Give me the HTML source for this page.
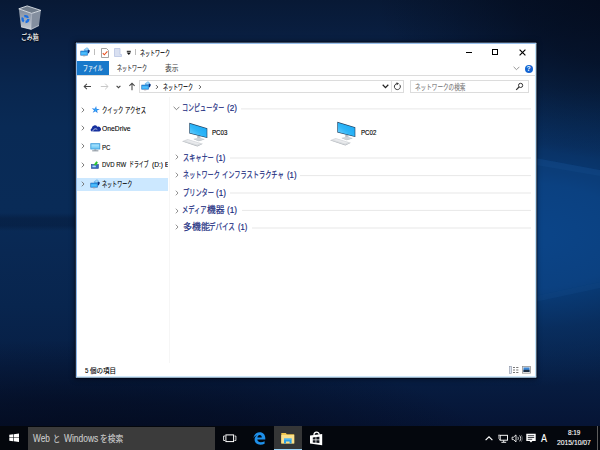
<!DOCTYPE html>
<html lang="ja">
<head>
<meta charset="utf-8">
<title>ネットワーク</title>
<style>
*{box-sizing:border-box;margin:0;padding:0}
html,body{width:600px;height:450px;overflow:hidden}
body{position:relative;font-family:"Liberation Sans","Noto Sans CJK JP",sans-serif;font-size:7.5px;color:#000;background:#071a3a;}
.abs{position:absolute}
.t{position:absolute;white-space:nowrap;line-height:10px;height:10px;transform-origin:0 50%;-webkit-text-stroke:.1px currentColor}
#wall{position:absolute;left:0;top:0;width:600px;height:450px;
 background:
  radial-gradient(ellipse 250px 175px at 625px -15px, rgba(3,10,26,.9) 0%, rgba(3,10,26,.62) 45%, rgba(3,10,26,.25) 75%, rgba(3,10,26,0) 100%),
  radial-gradient(ellipse 420px 120px at 80px 460px, rgba(3,9,26,.85) 0%, rgba(3,9,26,.55) 50%, rgba(3,9,26,0) 100%),
  radial-gradient(ellipse 300px 150px at 525px 236px, rgba(9,65,130,1) 0%, rgba(9,62,124,.95) 35%, rgba(9,52,106,.62) 62%, rgba(9,42,88,0) 100%),
  linear-gradient(180deg,#081935 0%,#091f42 9%,#09264e 19%,#092a55 28%,#092b57 46%,#092853 56%,#08254e 68%,#071d42 84%,#061536 94%,#05112d 100%);
}
/* taskbar */
#tb{position:absolute;left:0;top:426px;width:600px;height:24px;background:#04070d}
#tbs{position:absolute;left:28px;top:1px;width:187px;height:23px;background:#3b3b3b}
/* window */
#win{position:absolute;left:76px;top:43px;width:460px;height:334px;transform-origin:0 0;transform:translate(-.1px,-.2px) scale(1.0007,1.0021);background:#fff;border:1px solid;border-color:#7fb0e8 #b2dbf8 #a2d2f6 #7fb0e8;box-shadow:0 0 0 1px rgba(0,3,12,.8),0 0 5px 1px rgba(0,0,10,.55)}
#filetab{position:absolute;left:77px;top:61px;width:32px;height:14px;background:#1979ca}
.hl{position:absolute;height:1px;background:#e8e8e8}
.g{color:#1a2b80;font-size:9px;-webkit-text-stroke-width:.2px}
</style>
</head>
<body>
<div id="wall">
<svg class="abs" style="left:0;top:0" width="600" height="450" viewBox="0 0 600 450">
 <polygon points="530,157 600,170 600,282 530,297" fill="#2a86e0" fill-opacity=".07"/>
 <polygon points="530,157 600,170 600,176 530,164" fill="#4aa0f0" fill-opacity=".06"/>
 <polygon points="530,297 600,282 600,288 530,303" fill="#4aa0f0" fill-opacity=".06"/>
 <defs><linearGradient id="bandG" x1="0" y1="0" x2="0" y2="1"><stop offset="0" stop-color="#04132e" stop-opacity="0"/><stop offset=".3" stop-color="#04132e" stop-opacity=".34"/><stop offset=".7" stop-color="#04132e" stop-opacity=".34"/><stop offset="1" stop-color="#04132e" stop-opacity="0"/></linearGradient></defs>
 <rect x="0" y="213" width="80" height="18" fill="url(#bandG)"/>
</svg>
</div>

<!-- recycle bin -->
<svg class="abs" style="left:14px;top:2px" width="32" height="32" viewBox="0 0 32 32">
 <defs><linearGradient id="binL" x1="0" y1="0" x2="0" y2="1"><stop offset="0" stop-color="#9aa4b2" stop-opacity=".82"/><stop offset="1" stop-color="#cdd3db" stop-opacity=".95"/></linearGradient></defs>
 <polygon points="4.8,6.8 13.2,3.9 26.9,8.4 17.6,11.4" fill="#7b8594" fill-opacity=".92"/>
 <polygon points="4.8,6.8 17.6,11.4 17.1,27.4 7.1,24.9" fill="url(#binL)"/>
 <polygon points="17.6,11.4 26.9,8.4 25.0,23.5 17.1,27.4" fill="#8f99a8" fill-opacity=".92"/>
 <polygon points="4.8,6.8 13.2,3.9 26.9,8.4 17.6,11.4" fill="none" stroke="#dfe4ea" stroke-width=".9" stroke-linejoin="round"/>
 <polyline points="7.1,24.9 17.1,27.4 25.0,23.5" fill="none" stroke="#e6e9ee" stroke-width=".8" stroke-opacity=".85"/>
 <line x1="17.63869132290185" y1="11.379800853485063" x2="17.069701280227594" y2="27.382645803698434" stroke="#d5dae2" stroke-width=".7" stroke-opacity=".8"/>
 <circle cx="11.400" cy="17.100" r="2.900" fill="none" stroke="#1b6fe2" stroke-width="2.300" stroke-dasharray="4.300 1.800"/>
</svg>
<div class="t" id="t_bin" style="left:21.200px;top:32.600px;color:#fff;font-size:7.500px;text-shadow:0 1px 1px #000,0 0 2px #000;transform:scaleX(0.782)">ごみ箱</div>

<div id="win"></div>
<div id="filetab"></div>
<div class="hl" style="left:77px;top:75px;width:458px;background:#dcdcdc"></div>

<!-- title bar: quick access toolbar -->
<svg class="abs" style="left:80.200px;top:47.300px" width="11" height="10" viewBox="0 0 11 10">
 <path d="M3.600 2.700 L7 0.200 L9.200 2.300 L8.300 4.300 L4.400 4.300 Z" fill="#6fb9ee"/>
 <path d="M5 2.600 L7 1.100 L8.100 2.200 L7.400 3.600 Z" fill="#a9d8f6"/>
 <path d="M7.700 2.700 L10 3.600 L8.700 6.400 L7.600 5.700 Z" fill="#0d3079"/>
 <rect x="0.400" y="3.700" width="7.300" height="4.800" rx=".3" fill="#1562b4"/>
 <rect x="0.900" y="4.400" width="6.400" height="3.700" fill="#2da4f3"/>
 <rect x="1.300" y="5.300" width="5.400" height="2.100" fill="#5cc6fe" fill-opacity=".75"/>
 <rect x="2.900" y="8.500" width="2.400" height=".8" fill="#a39aa2"/>
</svg>
<div class="abs" style="left:94px;top:48.500px;width:1px;height:6.800px;background:#bdbdbd"></div>
<svg class="abs" style="left:101px;top:48px" width="8" height="10" viewBox="0 0 8 10">
 <path d="M0.5 0.5 H5.5 L7.5 2.5 V9.5 H0.5 Z" fill="#fff" stroke="#8c8c8c" stroke-width=".800"/>
 <path d="M1.8 5.2 L3.3 6.8 L6.4 3.3" fill="none" stroke="#e8501f" stroke-width="1.100"/>
</svg>
<svg class="abs" style="left:114px;top:48px" width="8" height="9" viewBox="0 0 8 9">
 <path d="M0.5 0.5 H6 V6.5 H7.5 V8.5 H0.5 Z" fill="#d9e0f1" stroke="#b9c4e2" stroke-width=".8"/>
</svg>
<svg class="abs" style="left:126px;top:50px" width="6" height="6" viewBox="0 0 6 6">
 <rect x="0.8" y="0.8" width="4" height="1" fill="#111"/>
 <path d="M0.6 2.6 H5 L2.8 5 Z" fill="#111"/>
</svg>
<div class="abs" style="left:135px;top:48.500px;width:1px;height:6.800px;background:#bdbdbd"></div>
<div class="t" id="t_title" style="left:140px;top:48.6px;transform:scaleX(0.667)">ネットワーク</div>

<!-- caption buttons -->
<div class="abs" style="left:466px;top:52px;width:6px;height:1px;background:#000"></div>
<div class="abs" style="left:492px;top:49px;width:6px;height:6px;border:1px solid #000"></div>
<svg class="abs" style="left:519px;top:49px" width="7" height="7" viewBox="0 0 7 7"><path d="M0.600 0.600 L6.400 6.400 M6.400 0.600 L0.600 6.400" stroke="#000" stroke-width="1.150"/></svg>

<!-- ribbon tabs -->
<div class="t" id="t_file" style="left:82.600px;top:64.0px;color:#fff;transform:scaleX(0.653)">ファイル</div>
<div class="t" id="t_tabnet" style="left:117px;top:64.2px;color:#3a3a3a;-webkit-text-stroke-width:.15px;transform:scaleX(0.667)">ネットワーク</div>
<div class="t" id="t_tabview" style="left:165px;top:64.2px;color:#444;-webkit-text-stroke-width:.1px;transform:scaleX(0.893)">表示</div>
<svg class="abs" style="left:513px;top:66px" width="7" height="5" viewBox="0 0 7 5"><path d="M0.6 0.8 L3.5 3.7 L6.4 0.8" fill="none" stroke="#8a8a8a" stroke-width=".9"/></svg>
<div class="abs" style="left:524.500px;top:64.500px;width:8.200px;height:8.200px;border-radius:50%;background:#1464d2;color:#fff;font-size:6.800px;font-weight:bold;line-height:8.400px;text-align:center">?</div>

<!-- nav row -->
<svg class="abs" style="left:83px;top:83px" width="9" height="7" viewBox="0 0 9 7"><path d="M8 3.500 H1.200 M3.900 0.800 L1.200 3.500 L3.900 6.200" fill="none" stroke="#454545" stroke-width="1.050"/></svg>
<svg class="abs" style="left:100px;top:83px" width="9" height="7" viewBox="0 0 9 7"><path d="M0.8 3.5 H8 M5.2 0.7 L8 3.5 L5.2 6.3" fill="none" stroke="#c8c8c8" stroke-width="1"/></svg>
<svg class="abs" style="left:116px;top:85px" width="5" height="4" viewBox="0 0 5 4"><path d="M0.600 0.800 L2.500 2.700 L4.400 0.800" fill="none" stroke="#444" stroke-width="1.100"/></svg>
<svg class="abs" style="left:128px;top:82px" width="8" height="9" viewBox="0 0 8 9"><path d="M4 8.200 V1.200 M1.400 3.800 L4 1.200 L6.600 3.800" fill="none" stroke="#454545" stroke-width="1.050"/></svg>
<div class="abs" style="left:139px;top:80px;width:265px;height:13px;border:1px solid #dcdcdc;background:#fff"></div>
<svg class="abs" style="left:140.600px;top:81.300px" width="11" height="10" viewBox="0 0 11 10">
 <path d="M3.600 2.700 L7 0.200 L9.200 2.300 L8.300 4.300 L4.400 4.300 Z" fill="#6fb9ee"/>
 <path d="M5 2.600 L7 1.100 L8.100 2.200 L7.400 3.600 Z" fill="#a9d8f6"/>
 <path d="M7.700 2.700 L10 3.600 L8.700 6.400 L7.600 5.700 Z" fill="#0d3079"/>
 <rect x="0.400" y="3.700" width="7.300" height="4.800" rx=".3" fill="#1562b4"/>
 <rect x="0.900" y="4.400" width="6.400" height="3.700" fill="#2da4f3"/>
 <rect x="1.300" y="5.300" width="5.400" height="2.100" fill="#5cc6fe" fill-opacity=".75"/>
 <rect x="2.900" y="8.500" width="2.400" height=".8" fill="#a39aa2"/>
</svg>
<svg class="abs" style="left:155px;top:84px" width="4" height="6" viewBox="0 0 4 6"><path d="M1 1.100 L2.900 3 L1 4.900" fill="none" stroke="#555" stroke-width=".95"/></svg>
<div class="t" id="t_addr" style="left:163px;top:82.5px;transform:scaleX(0.667)">ネットワーク</div>
<svg class="abs" style="left:198px;top:84px" width="4" height="6" viewBox="0 0 4 6"><path d="M1 1.100 L2.900 3 L1 4.900" fill="none" stroke="#555" stroke-width=".95"/></svg>
<svg class="abs" style="left:382px;top:84px" width="7" height="5" viewBox="0 0 7 5"><path d="M0.700 0.800 L3.500 3.600 L6.300 0.800" fill="none" stroke="#222" stroke-width="1.250"/></svg>
<div class="abs" style="left:391px;top:81px;width:1px;height:11px;background:#e0e0e0"></div>
<svg class="abs" style="left:393px;top:82px" width="9" height="9" viewBox="0 0 9 9"><path d="M6.700 2.700 A3 3 0 1 1 4.300 1.600" fill="none" stroke="#3a3a3a" stroke-width="1"/><path d="M3.500 0.200 L6 1.600 L3.800 3.300 Z" fill="#3a3a3a"/></svg>
<div class="abs" style="left:410px;top:80px;width:119px;height:13px;border:1px solid #dcdcdc;background:#fff"></div>
<div class="t" id="t_search" style="left:415px;top:82.5px;color:#787878;-webkit-text-stroke-width:.1px;transform:scaleX(0.747)">ネットワークの検索</div>
<svg class="abs" style="left:515px;top:82px" width="9" height="9" viewBox="0 0 9 9"><circle cx="5.6" cy="3.4" r="2.1" fill="none" stroke="#333" stroke-width="1"/><path d="M4 5 L1.2 7.8" stroke="#333" stroke-width="1.2"/></svg>

<!-- navigation pane -->
<div class="abs" style="left:77px;top:177.600px;width:90.500px;height:13.500px;background:#cce8ff"></div>
<div class="abs" style="left:169px;top:97px;width:1px;height:266px;background:#f6f6f6"></div>

<svg class="abs" style="left:81px;top:106.7px" width="4" height="6" viewBox="0 0 4 6"><path d="M0.8 0.7 L3 3 L0.8 5.3" fill="none" stroke="#6e6e6e" stroke-width=".9"/></svg>
<svg class="abs" style="left:81px;top:125.3px" width="4" height="6" viewBox="0 0 4 6"><path d="M0.8 0.7 L3 3 L0.8 5.3" fill="none" stroke="#6e6e6e" stroke-width=".9"/></svg>
<svg class="abs" style="left:81px;top:143.3px" width="4" height="6" viewBox="0 0 4 6"><path d="M0.8 0.7 L3 3 L0.8 5.3" fill="none" stroke="#6e6e6e" stroke-width=".9"/></svg>
<svg class="abs" style="left:81px;top:161.5px" width="4" height="6" viewBox="0 0 4 6"><path d="M0.8 0.7 L3 3 L0.8 5.3" fill="none" stroke="#6e6e6e" stroke-width=".9"/></svg>
<svg class="abs" style="left:81px;top:180.6px" width="4" height="6" viewBox="0 0 4 6"><path d="M0.8 0.7 L3 3 L0.8 5.3" fill="none" stroke="#6e6e6e" stroke-width=".9"/></svg>
<svg class="abs" style="left:91px;top:105.600px" width="10" height="8" viewBox="0 0 10 8"><polygon points="5.11,0.06 5.65,2.88 8.82,3.15 6.01,4.49 6.69,7.28 4.41,5.28 1.67,6.74 3.08,4.17 0.70,2.27 3.85,2.68" fill="#1f7de8"/><circle cx="4.600" cy="3.900" r="1.300" fill="#35a8fa"/></svg>
<svg class="abs" style="left:89.700px;top:124.500px" width="11" height="7" viewBox="0 0 11 7"><path d="M1.900 6.600 A1.800 1.800 0 0 1 1.800 3.200 A3 3 0 0 1 7.300 1.700 A2.600 2.600 0 0 1 9.300 6.600 Z" fill="#16309e"/><path d="M2.700 6.700 C3 4.200 5.400 3 7.300 4.600" fill="none" stroke="#fff" stroke-width=".7"/></svg>
<svg class="abs" style="left:90px;top:142.700px" width="11" height="9" viewBox="0 0 11 9"><rect x="0.800" y="0.700" width="9" height="5.300" fill="#79cdf7" stroke="#3596d8" stroke-width=".8"/><rect x="1.600" y="1.500" width="7.400" height="2" fill="#a6e0fb" fill-opacity=".8"/><rect x="4.300" y="6.400" width="2" height="1" fill="#8d99a5"/><rect x="2.200" y="7.400" width="6.200" height=".9" fill="#76828e"/></svg>
<svg class="abs" style="left:91.300px;top:160.500px" width="8" height="8" viewBox="0 0 8 8"><rect x="0.400" y="3.500" width="7" height="3.900" fill="#3767bd" stroke="#284a93" stroke-width=".6"/><rect x="1.400" y="4.500" width="3.400" height="1.700" fill="#a8d6f6"/><path d="M2.800 3.800 L5.300 0.300 L6.900 1.300 L5.200 4.500 Z" fill="#2ec62e"/></svg>
<svg class="abs" style="left:89.800px;top:178.700px" width="11" height="10" viewBox="0 0 11 10">
 <path d="M3.600 2.700 L7 0.200 L9.200 2.300 L8.300 4.300 L4.400 4.300 Z" fill="#6fb9ee"/>
 <path d="M5 2.600 L7 1.100 L8.100 2.200 L7.400 3.600 Z" fill="#a9d8f6"/>
 <path d="M7.700 2.700 L10 3.600 L8.700 6.400 L7.600 5.700 Z" fill="#0d3079"/>
 <rect x="0.400" y="3.700" width="7.300" height="4.800" rx=".3" fill="#1562b4"/>
 <rect x="0.900" y="4.400" width="6.400" height="3.700" fill="#2da4f3"/>
 <rect x="1.300" y="5.300" width="5.400" height="2.100" fill="#5cc6fe" fill-opacity=".75"/>
 <rect x="2.900" y="8.500" width="2.400" height=".8" fill="#a39aa2"/>
</svg>
<div class="t" id="t_sb1" style="left:102px;top:105.7px;transform:scaleX(0.713)">クイック アクセス</div>
<div class="t" id="t_sb2" style="font-size:8px;left:102px;top:124.2px;transform:scaleX(0.846)">OneDrive</div>
<div class="t" id="t_sb3" style="font-size:8px;left:102px;top:142.7px;transform:scaleX(0.764)">PC</div>
<div class="t" id="t_sb5" style="left:102px;top:179.8px;transform:scaleX(0.673)">ネットワーク</div>
<svg class="abs" style="left:173px;top:105.5px" width="7" height="5" viewBox="0 0 7 5"><path d="M0.600 0.800 L3.500 3.700 L6.400 0.800" fill="none" stroke="#666" stroke-width=".8"/></svg>
<div class="hl" style="left:241px;top:0;width:290px;transform:translateY(108.4px)"></div>
<svg class="abs" style="left:175px;top:154px" width="4" height="6" viewBox="0 0 4 6"><path d="M0.8 0.7 L3 3 L0.8 5.3" fill="none" stroke="#858585" stroke-width=".9"/></svg>
<div class="hl" style="left:230px;top:0;width:301px;transform:translateY(157.5px)"></div>
<svg class="abs" style="left:175px;top:172px" width="4" height="6" viewBox="0 0 4 6"><path d="M0.8 0.7 L3 3 L0.8 5.3" fill="none" stroke="#858585" stroke-width=".9"/></svg>
<div class="hl" style="left:300px;top:0;width:231px;transform:translateY(175.1px)"></div>
<svg class="abs" style="left:175px;top:189.5px" width="4" height="6" viewBox="0 0 4 6"><path d="M0.8 0.7 L3 3 L0.8 5.3" fill="none" stroke="#858585" stroke-width=".9"/></svg>
<div class="hl" style="left:230px;top:0;width:301px;transform:translateY(192.5px)"></div>
<svg class="abs" style="left:175px;top:207.5px" width="4" height="6" viewBox="0 0 4 6"><path d="M0.8 0.7 L3 3 L0.8 5.3" fill="none" stroke="#858585" stroke-width=".9"/></svg>
<div class="hl" style="left:242px;top:0;width:289px;transform:translateY(209.9px)"></div>
<svg class="abs" style="left:175px;top:224px" width="4" height="6" viewBox="0 0 4 6"><path d="M0.8 0.7 L3 3 L0.8 5.3" fill="none" stroke="#858585" stroke-width=".9"/></svg>
<div class="hl" style="left:252px;top:0;width:279px;transform:translateY(227.5px)"></div>
<svg class="abs" style="left:181.500px;top:120.500px" width="27" height="26" viewBox="0 0 27 26">
 <defs><linearGradient id="scr181_500" x1="1" y1="0" x2="0" y2="1"><stop offset="0" stop-color="#16a6f4"/><stop offset=".55" stop-color="#2fb6f8"/><stop offset="1" stop-color="#7ad4fd"/></linearGradient></defs>
 <path d="M15.300 14.600 L18.400 15.400 L18.400 18 L15.300 17.300 Z" fill="#b4bbc2"/>
 <path d="M11.800 17.700 L17.300 16.500 L22.300 18 L16.800 19.700 Z" fill="#cfd4d9"/>
 <path d="M11.800 17.700 L16.800 19.700 L22.300 18 L22.300 18.500 L16.800 20.300 L11.800 18.200 Z" fill="#a4abb3"/>
 <path d="M7.300 1.800 L25.300 7.200 L25.300 17.100 L7.300 12.600 Z" fill="#22405f"/>
 <path d="M7.900 2.700 L24.700 7.700 L24.700 16.300 L7.900 12.100 Z" fill="url(#scr181_500)"/>
 <path d="M0.500 19.900 L5.600 18 L20.400 22.400 L15.400 24.700 Z" fill="#d9dcdf"/>
 <path d="M0.500 19.900 L15.400 24.700 L20.400 22.400 L20.400 23 L15.400 25.400 L0.500 20.500 Z" fill="#a7adb4"/>
 <path d="M3.500 19.900 L6 19 L17.500 22.400 L15 23.500 Z" fill="#eceef0" fill-opacity=".8"/>
</svg>
<svg class="abs" style="left:330.300px;top:120.300px" width="27" height="26" viewBox="0 0 27 26">
 <defs><linearGradient id="scr330_300" x1="1" y1="0" x2="0" y2="1"><stop offset="0" stop-color="#16a6f4"/><stop offset=".55" stop-color="#2fb6f8"/><stop offset="1" stop-color="#7ad4fd"/></linearGradient></defs>
 <path d="M15.300 14.600 L18.400 15.400 L18.400 18 L15.300 17.300 Z" fill="#b4bbc2"/>
 <path d="M11.800 17.700 L17.300 16.500 L22.300 18 L16.800 19.700 Z" fill="#cfd4d9"/>
 <path d="M11.800 17.700 L16.800 19.700 L22.300 18 L22.300 18.500 L16.800 20.300 L11.800 18.200 Z" fill="#a4abb3"/>
 <path d="M7.300 1.800 L25.300 7.200 L25.300 17.100 L7.300 12.600 Z" fill="#22405f"/>
 <path d="M7.900 2.700 L24.700 7.700 L24.700 16.300 L7.900 12.100 Z" fill="url(#scr330_300)"/>
 <path d="M0.500 19.900 L5.600 18 L20.400 22.400 L15.400 24.700 Z" fill="#d9dcdf"/>
 <path d="M0.500 19.900 L15.400 24.700 L20.400 22.400 L20.400 23 L15.400 25.400 L0.500 20.500 Z" fill="#a7adb4"/>
 <path d="M3.500 19.900 L6 19 L17.500 22.400 L15 23.500 Z" fill="#eceef0" fill-opacity=".8"/>
</svg>
<div class="t g" id="t_g1a" style="left:182.4px;top:103.0px;transform:scaleX(0.671)">コンピューター</div>
<div class="t g" id="t_g1b" style="left:226.7px;top:103.0px;transform:scaleX(0.900)">(2)</div>
<div class="t g" id="t_g2a" style="left:182.5px;top:152.5px;transform:scaleX(0.682)">スキャナー</div>
<div class="t g" id="t_g2b" style="left:216.1px;top:152.5px;transform:scaleX(0.855)">(1)</div>
<div class="t g" id="t_g3a" style="left:182.5px;top:169.9px;transform:scaleX(0.681)">ネットワーク</div>
<div class="t g" id="t_g3b" style="left:222.2px;top:169.9px;transform:scaleX(0.690)">インフラストラクチャ</div>
<div class="t g" id="t_g3c" style="left:286.8px;top:169.9px;transform:scaleX(0.864)">(1)</div>
<div class="t g" id="t_g4a" style="left:182.5px;top:187.5px;transform:scaleX(0.689)">プリンター</div>
<div class="t g" id="t_g4b" style="left:215.9px;top:187.5px;transform:scaleX(0.900)">(1)</div>
<div class="t g" id="t_g5a" style="left:182.4px;top:204.9px;transform:scaleX(0.695)">メディア</div>
<div class="t g" id="t_g5b" style="left:207.0px;top:204.9px;transform:scaleX(0.977)">機器</div>
<div class="t g" id="t_g5c" style="left:227.4px;top:204.9px;transform:scaleX(0.909)">(1)</div>
<div class="t g" id="t_g6a" style="left:182.7px;top:222.4px;transform:scaleX(0.996)">多機能</div>
<div class="t g" id="t_g6b" style="left:209.2px;top:222.4px;transform:scaleX(0.722)">デバイス</div>
<div class="t g" id="t_g6c" style="left:237.7px;top:222.4px;transform:scaleX(0.845)">(1)</div>
<div class="t" id="t_sb4a" style="font-size:8px;left:102.1px;top:160.2px;transform:scaleX(0.752)">DVD RW</div>
<div class="t" id="t_sb4b" style="left:129.200px;top:160.2px;transform:scaleX(0.657)">ドライブ</div>
<div class="t" id="t_sb4c" style="font-size:8px;left:152.100px;top:160.2px;transform:scaleX(0.825)">(D:)</div>
<div class="t" id="t_sb4d" style="font-size:8px;left:164.800px;top:160.200px;width:2.900px;overflow:hidden">E</div>
<div class="t" id="t_pc03" style="font-size:7.600px;-webkit-text-stroke-width:.15px;left:211.700px;top:128px;transform:scaleX(0.805)">PC03</div>
<div class="t" id="t_pc02" style="font-size:7.600px;-webkit-text-stroke-width:.15px;left:360.600px;top:127.600px;transform:scaleX(0.805)">PC02</div>
<div class="t" id="t_status5" style="font-size:8px;left:84.800px;top:365.700px;transform:scaleX(0.764)">5</div>
<div class="t" id="t_status" style="font-size:7px;left:89.900px;top:366.200px;transform:scaleX(0.929)">個の項目</div>
<svg class="abs" style="left:509px;top:366px" width="10" height="8" viewBox="0 0 10 8"><rect x="0.400" y="0.400" width="2.200" height="7.200" fill="#dfe6f2" stroke="#8c96a8" stroke-width=".6"/><path d="M4 1.500 H6 M7.200 1.500 H9.400 M4 4 H6 M7.200 4 H9.400 M4 6.500 H6 M7.200 6.500 H9.400" stroke="#666" stroke-width=".9"/></svg>
<svg class="abs" style="left:522px;top:366px" width="9" height="8" viewBox="0 0 9 8"><rect x="0.400" y="0.400" width="8.200" height="6.800" fill="#e9e9e9" stroke="#8a8a8a" stroke-width=".7"/><rect x="1.500" y="1.500" width="6" height="4.500" fill="#3b86d6"/><rect x="1.500" y="3.800" width="6" height="2.200" fill="#1d2f44"/></svg>

<div id="tb"><div id="tbs"></div>
 <div class="abs" style="left:274px;top:0;width:28px;height:24px;background:#353637"></div>
 <div class="abs" style="left:274px;top:22.500px;width:28px;height:1.500px;background:#9ad4f8"></div>
 <div class="abs" style="left:597px;top:0;width:1px;height:24px;background:#5c5c5c"></div>
</div>
<!-- start -->
<svg class="abs" style="left:8.900px;top:433.200px" width="10.300" height="9.500" viewBox="0 0 10.600 9.800" preserveAspectRatio="none">
 <path d="M0.300 1.900 L4.300 1.300 V4.600 H0.300 Z M4.900 1.200 L10.300 0.400 V4.600 H4.900 Z M0.300 5.200 H4.300 V8.500 L0.300 7.900 Z M4.900 5.200 H10.300 V9.400 L4.900 8.600 Z" fill="#fff"/>
</svg>
<div class="t" id="t_tbs1" style="left:32.8px;top:433.600px;color:#cdcdcd;font-size:10.3px;-webkit-text-stroke-width:.1px;transform:scaleX(0.805)">Web</div>
<div class="t" id="t_tbs2" style="left:53.0px;top:433.600px;color:#cdcdcd;font-size:8.8px;-webkit-text-stroke-width:.1px;transform:scaleX(0.817)">と</div>
<div class="t" id="t_tbs3" style="left:64.0px;top:433.600px;color:#cdcdcd;font-size:10.3px;-webkit-text-stroke-width:.1px;transform:scaleX(0.819)">Windows</div>
<div class="t" id="t_tbs4" style="left:100.1px;top:433.600px;color:#cdcdcd;font-size:8.8px;-webkit-text-stroke-width:.1px;transform:scaleX(0.882)">を検索</div>
<!-- task view -->
<svg class="abs" style="left:222px;top:433px" width="15" height="10" viewBox="0 0 15 10">
 <rect x="3.900" y="1.900" width="7.700" height="6.700" fill="none" stroke="#fff" stroke-width="1"/>
 <path d="M3 3 H1.600 V7.500 H3 M12.500 3 H13.900 V7.500 H12.500" fill="none" stroke="#f4f4f4" stroke-width=".9"/>
</svg>
<!-- edge -->
<svg class="abs" style="left:253px;top:432px" width="13" height="13" viewBox="0 0 13 13">
 <path d="M0.500 6.200 C0.800 2.600 3.400 0.300 6.700 0.300 C10.200 0.300 12.300 2.900 12.300 6.300 V7.600 H4.300 C4.500 9.400 6 10.300 7.800 10.300 C9.300 10.300 10.500 9.900 11.600 9.200 V11.700 C10.400 12.400 9 12.700 7.400 12.700 C3.900 12.700 1.600 10.500 1.600 7.500 C1.600 5.600 2.600 4.100 4.100 3.200 C2.500 3.500 1.200 4.600 0.500 6.200 Z M4.400 5.400 H8.800 C8.800 3.900 8 2.900 6.700 2.900 C5.500 2.900 4.600 3.900 4.400 5.400 Z" fill="#1e90ea"/>
</svg>
<!-- explorer -->
<svg class="abs" style="left:281px;top:432px" width="14" height="12" viewBox="0 0 14 12">
 <path d="M0.300 1 H4.800 L5.800 2.200 H13.200 V11.400 H0.300 Z" fill="#f0c64e"/>
 <path d="M0.300 3 H13.200 V11.400 H0.300 Z" fill="#fae08d"/>
 <path d="M3 6.600 H10.600 V11.400 H8.600 V9.400 H5 V11.400 H3 Z" fill="#2a9fe8"/>
 <path d="M3 6.600 H10.600 V7.600 H3 Z" fill="#66c3f6"/>
</svg>
<!-- store -->
<svg class="abs" style="left:309px;top:431px" width="14" height="15" viewBox="0 0 14 15">
 <path d="M4.900 4.200 C4.900 0.200 10.200 0.200 10.200 3.800" fill="none" stroke="#fff" stroke-width="1.200"/>
 <path d="M1 4.600 L13.200 3 V14.200 L1 12.600 Z" fill="#fff"/>
 <path d="M3.800 6.400 L6.600 6.100 V8.500 H3.800 Z M7.300 6 L10.400 5.700 V8.500 H7.300 Z M3.800 9.200 H6.600 V11.700 L3.800 11.400 Z M7.300 9.200 H10.400 V12.100 L7.300 11.800 Z" fill="#10131a"/>
</svg>
<!-- tray -->
<svg class="abs" style="left:485px;top:436px" width="8" height="5" viewBox="0 0 8 5"><path d="M0.600 4.100 L4 0.900 L7.400 4.100" fill="none" stroke="#fff" stroke-width="1.200"/></svg>
<svg class="abs" style="left:498px;top:434px" width="11" height="9" viewBox="0 0 11 9">
 <rect x="2.200" y="1.300" width="7.300" height="4.900" fill="none" stroke="#fff" stroke-width=".95"/>
 <path d="M5.700 6.400 V8 M3.400 8.300 H8.200" stroke="#fff" stroke-width=".95"/>
 <path d="M0.200 1.200 H2 M0.900 1.200 V4.600 L2.200 6.400" fill="none" stroke="#e8e8e8" stroke-width=".75"/>
</svg>
<svg class="abs" style="left:511px;top:434px" width="12" height="9" viewBox="0 0 12 9">
 <path d="M1.100 3.200 H2.500 L5 0.900 V7.900 L2.500 5.600 H1.100 Z" fill="none" stroke="#fff" stroke-width=".85"/>
 <path d="M6.800 2.900 C7.500 3.800 7.500 5 6.800 5.900 M8.600 1.500 C10.100 3.300 10.100 5.500 8.600 7.300" fill="none" stroke="#fff" stroke-width=".85"/>
 <path d="M10.200 0.900 C11.700 3.200 11.700 5.600 10.200 7.900" fill="none" stroke="#fff" stroke-width=".6" stroke-opacity=".55"/>
</svg>
<svg class="abs" style="left:526px;top:433px" width="10" height="10" viewBox="0 0 10 10">
 <path d="M0.300 0.700 H9.700 V8 H6.400 L5 9.500 L3.600 8 H0.300 Z" fill="#fff"/>
 <path d="M1.800 2.700 H8.200 M1.800 4.500 H8.200 M1.800 6.300 H6.200" stroke="#10131a" stroke-width=".8"/>
</svg>
<div class="t" id="t_ime" style="left:541px;top:433.700px;color:#fff;font-size:10px;transform:scaleX(0.899)">A</div>
<div class="t" id="t_time" style="left:568px;top:428px;color:#fff;font-size:7.200px;-webkit-text-stroke-width:.12px;transform:scaleX(0.879)">8:19</div>
<div class="t" id="t_date" style="left:556.800px;top:438px;color:#fff;font-size:7.200px;-webkit-text-stroke-width:.12px;transform:scaleX(0.942)">2015/10/07</div>
</body>
</html>
